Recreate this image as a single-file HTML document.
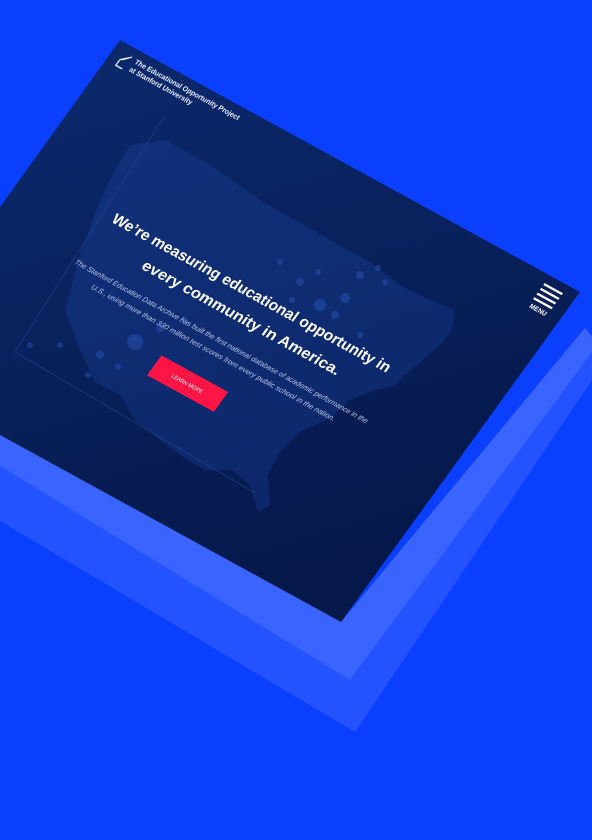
<!DOCTYPE html>
<html><head><meta charset="utf-8"><style>
html,body{margin:0;padding:0;background:#0a3fff;width:592px;height:840px;overflow:hidden}
svg{display:block}
text{font-family:"Liberation Sans",sans-serif}
</style></head><body>
<svg width="592" height="840" viewBox="0 0 592 840" xmlns="http://www.w3.org/2000/svg">
<defs>
<linearGradient id="pg" x1="0" y1="0" x2="0.3" y2="1">
<stop offset="0" stop-color="#0c2a6e"/><stop offset="1" stop-color="#06184a"/>
</linearGradient>
</defs>
<rect width="592" height="840" fill="#0a3fff"/>
<polygon points="592,352 592,380 355,732 0,521 0,466 350,680" fill="#2452ff"/>
<polygon points="585,328 592,336 592,352 350,680 0,466 0,424 341,622" fill="#3a64ff"/>
<polygon points="120,40 580,292 341,622 0,435 0,207" fill="url(#pg)"/>
<g opacity="0.3">
<polygon fill="#1d4aa8" points="130,145 165,140 210,165 260,200 330,240 370,262 400,285 430,300 455,310 452,330 440,345 420,362 395,385 370,392 350,400 330,418 300,432 280,452 268,475 270,505 258,512 250,485 232,470 205,470 180,455 160,440 135,420 120,395 95,382 80,350 65,310 78,260 100,200 118,165"/>
</g>
<g fill="#2a56b8" opacity="0.45">
<circle cx="345" cy="298" r="5"/><circle cx="360" cy="275" r="4"/><circle cx="378" cy="268" r="3"/><circle cx="385" cy="282" r="3"/><circle cx="318" cy="272" r="3"/><circle cx="300" cy="282" r="4"/><circle cx="292" cy="300" r="3"/><circle cx="320" cy="305" r="6"/><circle cx="280" cy="262" r="3"/><circle cx="335" cy="315" r="4"/><circle cx="135" cy="342" r="8"/><circle cx="100" cy="355" r="4"/><circle cx="118" cy="367" r="3"/><circle cx="88" cy="375" r="3"/><circle cx="60" cy="345" r="3"/><circle cx="30" cy="345" r="3"/><circle cx="160" cy="328" r="4"/><circle cx="185" cy="320" r="3"/><circle cx="210" cy="300" r="3"/><circle cx="240" cy="290" r="3"/><circle cx="360" cy="335" r="3"/>
</g>
<polyline points="165,115 15,352 255,493" fill="none" stroke="#2a4fa5" stroke-width="0.8" opacity="0.6"/>
<g transform="matrix(0.46,0.252,-0.341,0.471,120,40)">
<path d="M22 30 L38 16 M22 30 L22 42 L36 42 M26 28 L34 20" stroke="#dfe6ff" stroke-width="2.5" fill="none"/>
<text x="48" y="24" font-size="13" fill="#e8ecff" font-weight="bold">The Educational Opportunity Project</text>
<text x="48" y="40" font-size="13" fill="#e8ecff" font-weight="bold">at Stanford University</text>
<g stroke="#ffffff" stroke-width="4">
<line x1="935" y1="18" x2="975" y2="18"/><line x1="935" y1="28" x2="975" y2="28"/><line x1="935" y1="38" x2="975" y2="38"/><line x1="935" y1="48" x2="975" y2="48"/>
</g>
<text x="955" y="66" font-size="12" fill="#fff" text-anchor="middle" font-weight="bold">MENU</text>
<text x="190" y="284" font-size="27" font-weight="bold" fill="#ffffff" textLength="600" lengthAdjust="spacingAndGlyphs">We’re measuring educational opportunity in</text>
<text x="289" y="330" font-size="27" font-weight="bold" fill="#ffffff" textLength="426" lengthAdjust="spacingAndGlyphs">every community in America.</text>
<text x="180" y="378" font-size="13" fill="#b9c4e8" font-style="italic" textLength="635" lengthAdjust="spacingAndGlyphs">The Stanford Education Data Archive has built the first national database of academic performance in the</text>
<text x="234" y="402" font-size="13" fill="#b9c4e8" font-style="italic" textLength="528" lengthAdjust="spacingAndGlyphs">U.S., using more than 330 million test scores from every public school in the nation.</text>
<rect x="420" y="445" width="145" height="42" fill="#ff1446"/>
<text x="492" y="470" font-size="10" fill="#fff" text-anchor="middle">LEARN MORE</text>
</g>
</svg>
</body></html>
